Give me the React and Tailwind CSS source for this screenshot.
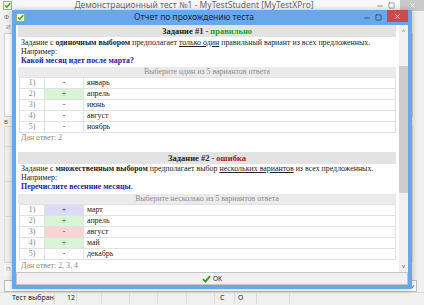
import { Minus, Square, X } from 'lucide-react'

const serif = "font-['Liberation_Serif','Times_New_Roman',serif]"

function AppIcon() {
  return (
    <svg width="9" height="9" viewBox="0 0 9 9" className="shrink-0">
      <rect x="0.5" y="0.5" width="8" height="8" fill="#f4fbe9" stroke="#8fb86a" />
      <path d="M2 4.5 L3.8 6.3 L7.2 2.2" fill="none" stroke="#3b9b2a" strokeWidth="1.4" />
    </svg>
  )
}

function Table({ rows }) {
  return (
    <div className="ml-[1px] border-t border-l border-[#e2e2e2]">
      {rows.map((r, i) => (
        <div key={i} className="flex h-[11px] border-b border-[#e2e2e2] items-center">
          <div className="w-[25px] h-full flex items-center justify-center border-r border-[#e2e2e2] text-[#8a8a8a]">
            {i + 1})
          </div>
          <div className={`w-[39px] h-full flex items-center justify-center border-r border-[#e2e2e2] text-[#444] ${r.bg}`}>
            {r.sign}
          </div>
          <div className="flex-1 h-full pl-[3px] flex items-center border-r border-[#e2e2e2] text-[#222]">
            {r.text}
          </div>
        </div>
      ))}
    </div>
  )
}

function Header({ n, result, color }) {
  return (
    <div className="h-[12px] bg-[#e3e3e3] flex items-center justify-center font-bold text-[8.5px] text-[#222]">
      Задание #{n}
      <span className="mx-[2px] font-normal">-</span>
      <span className={color}>{result}</span>
    </div>
  )
}

function Band({ children }) {
  return (
    <div className="h-[10px] bg-[#ebebeb] flex items-center justify-center text-[#8c8c8c]">
      {children}
    </div>
  )
}

export default function App() {
  const rows1 = [
    { sign: '-', text: 'январь', bg: '' },
    { sign: '+', text: 'апрель', bg: 'bg-[#d8f6d4]' },
    { sign: '-', text: 'июнь', bg: '' },
    { sign: '-', text: 'август', bg: '' },
    { sign: '-', text: 'ноябрь', bg: '' },
  ]
  const rows2 = [
    { sign: '+', text: 'март', bg: 'bg-[#dcdcfa]' },
    { sign: '+', text: 'апрель', bg: 'bg-[#d8f6d4]' },
    { sign: '-', text: 'август', bg: 'bg-[#fad4d4]' },
    { sign: '+', text: 'май', bg: 'bg-[#d8f6d4]' },
    { sign: '-', text: 'декабрь', bg: '' },
  ]

  return (
    <div className="relative w-[424px] h-[305px] overflow-hidden bg-[#f0f0f0] font-['Noto_Sans',sans-serif]">
      {/* background window */}
      <div className="flex flex-col h-full">
        <div className="h-[12px] bg-[#f9f9f9] flex items-center relative">
          <div className="pl-[3px]"><AppIcon /></div>
          <div className="flex-1 text-center text-[8.5px] text-[#6a6a6a] leading-none">
            Демонстрационный тест №1 - MyTestStudent [MyTestXPro]
          </div>
          <div className="flex items-center h-full">
            <Minus size={8} className="text-[#666] mr-[4px]" />
            <Square size={7} className="text-[#666] mr-[5px]" />
            <div className="w-[24px] h-full bg-[#c9c9c9] flex items-center justify-center">
              <X size={7} className="text-white" strokeWidth={3} />
            </div>
          </div>
        </div>
        <div className="flex-1 flex flex-col px-[4px] pt-[2px]">
          <div className="h-[10px] text-[6px] text-[#555]">Ф</div>
          <div className="h-[10px] text-[6px] text-[#888] pl-[2px]">И</div>
          <div className="h-[84px] mr-[7px] bg-white border border-[#cfcfcf]" />
          <div className="h-[8px] text-[6px] text-[#555] mt-[1px]">В</div>
          <div className="h-[137px] mr-[7px] border border-[#dcdcdc] flex flex-col">
            <div className="h-[20px] border-b border-[#dcdcdc]" />
            <div className="h-[35px] border-b border-[#dcdcdc]" />
            <div className="h-[35px] border-b border-[#dcdcdc]" />
            <div className="flex-1" />
          </div>
          <div className="h-[13px] mr-[7px] text-[6px] text-[#999] bg-[#f6f6f6] pl-[2px] leading-[13px]">П</div>
          <div className="h-[12px] mt-[4px] mr-[3px] bg-white border border-[#bdbdbd] flex justify-end items-center">
            <span className="text-[6px] text-[#555] pr-[2px]">v</span>
          </div>
        </div>
        <div className="h-[12px] border-t border-[#dadada] flex items-center text-[7px] text-[#222] mb-[1px] whitespace-nowrap">
          <div className="w-[55px] pl-[12px] h-full flex items-center border-r border-[#dadada]">Тест выбран</div>
          <div className="w-[22px] pl-[12px] h-full flex items-center border-r border-[#dadada]">12</div>
          <div className="w-[25px] h-full border-r border-[#dadada]" />
          <div className="w-[28px] h-full border-r border-[#dadada]" />
          <div className="w-[28px] h-full border-r border-[#dadada]" />
          <div className="w-[29px] h-full border-r border-[#dadada]" />
          <div className="w-[28px] h-full border-r border-[#dadada]" />
          <div className="w-[20px] pl-[5px] h-full flex items-center border-r border-[#dadada]">С</div>
          <div className="w-[22px] pl-[3px] h-full flex items-center border-r border-[#dadada]">О</div>
          <div className="w-[33px] h-full border-r border-[#dadada]" />
          <div className="flex-1" />
        </div>
      </div>

      {/* dialog window */}
      <div className="absolute left-[12px] top-[10px] w-[400px] h-[279px] bg-[#66a8ea] flex flex-col px-[4px] pb-[4px] shadow-[0_0_6px_rgba(0,0,0,0.25)]">
        <div className="h-[15px] flex items-center relative">
          <AppIcon />
          <div className="flex-1 text-center text-[8.5px] text-[#1a2a3a] leading-none">
            Отчет по прохождению теста
          </div>
          <div className="flex items-start h-full">
            <Minus size={8} className="text-[#1a2a3a] mt-[4px] mr-[4px]" />
            <Square size={7} className="text-[#1a2a3a] mt-[4px] mr-[5px]" />
            <div className="w-[21px] h-[12px] bg-[#c94c4c] flex items-center justify-center">
              <X size={7} className="text-white" strokeWidth={3} />
            </div>
          </div>
        </div>
        <div className="flex-1 bg-white flex flex-col">
          <div className="flex-1 flex overflow-hidden">
            <div className={`flex-1 ml-[2px] mr-[3px] overflow-hidden text-[7.9px] leading-none ${serif}`}>
              <Header n={1} result="правильно" color="text-[#2f9a2f]" />
              <div className="pt-[1px] pl-[3px] leading-[9px] text-[#222]">
                <div>
                  Задание с <b>одиночным выбором</b> предполагает{' '}
                  <span className="underline">только один</span> правильный вариант из всех предложенных.
                </div>
                <div>Например:</div>
                <div className="font-bold text-[#22229a]">Какой месяц идет после марта?</div>
              </div>
              <div className="mt-[2px]">
                <Band>Выберите один из 5 вариантов ответа</Band>
              </div>
              <Table rows={rows1} />
              <div className="h-[10px] flex items-center pl-[3px] text-[#8a8a8a]">Дан ответ: 2</div>
              <div className="h-[9px]" />
              <Header n={2} result="ошибка" color="text-[#a32020]" />
              <div className="pl-[3px] leading-[9px] text-[#222]">
                <div>
                  Задание с <b>множественным выбором</b> предполагает выбор{' '}
                  <span className="underline">нескольких вариантов</span> из всех предложенных.
                </div>
                <div>Например:</div>
                <div className="text-[#22229a]">
                  <b>Перечислите весенние месяцы</b>.
                </div>
              </div>
              <div className="mt-[3px]">
                <Band>Выберите несколько из 5 вариантов ответа</Band>
              </div>
              <Table rows={rows2} />
              <div className="h-[10px] mt-[1px] flex items-center pl-[3px] text-[#8a8a8a]">Дан ответ: 2, 3, 4</div>
            </div>
            <div className="w-[9px] bg-[#f0f0f0] flex flex-col">
              <div className="h-[12px] flex items-center justify-center text-[6px] text-[#606060]">^</div>
              <div className="h-[29px]" />
              <div className="h-[127px] bg-[#cdcdcd]" />
              <div className="flex-1" />
              <div className="h-[12px] flex items-center justify-center text-[6px] text-[#606060]">v</div>
            </div>
          </div>
          <div className="h-[13px] bg-[#f0f0f0] border border-[#c6c6c6] flex items-center justify-center gap-[2px]">
            <svg width="9" height="8" viewBox="0 0 9 8">
              <path d="M1 4.2 L3.4 6.6 L8 1.2" fill="none" stroke="#2e9b22" strokeWidth="1.8" />
            </svg>
            <span className="text-[6.5px] text-[#222]">OK</span>
          </div>
        </div>
      </div>
    </div>
  )
}
